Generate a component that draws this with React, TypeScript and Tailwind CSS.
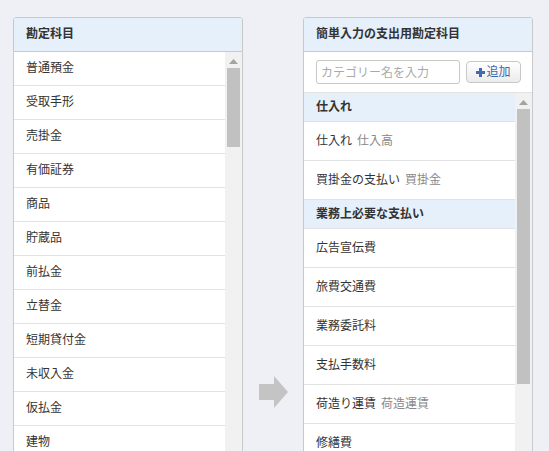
import React from "react";

const font = { fontFamily: '"Noto Sans CJK JP", "Noto Sans", sans-serif' };

const leftItems = [
  "普通預金",
  "受取手形",
  "売掛金",
  "有価証券",
  "商品",
  "貯蔵品",
  "前払金",
  "立替金",
  "短期貸付金",
  "未収入金",
  "仮払金",
  "建物",
];

type RightRow = { group?: boolean; label: string; sub?: string };
const rightItems: RightRow[] = [
  { group: true, label: "仕入れ" },
  { label: "仕入れ", sub: "仕入高" },
  { label: "買掛金の支払い", sub: "買掛金" },
  { group: true, label: "業務上必要な支払い" },
  { label: "広告宣伝費" },
  { label: "旅費交通費" },
  { label: "業務委託料" },
  { label: "支払手数料" },
  { label: "荷造り運賃", sub: "荷造運賃" },
  { label: "修繕費" },
];

function Scrollbar({ thumbTop, thumbHeight }: { thumbTop: number; thumbHeight: number }) {
  return (
    <div className="w-[17px] shrink-0 bg-[#f1f1f1] flex flex-col items-center">
      <svg width="9" height="5" viewBox="0 0 9 5" className="mt-[7px]">
        <polygon points="4.5,0 9,5 0,5" fill="#a3a3a3" />
      </svg>
      <div
        className="w-[13px] bg-[#c1c1c1]"
        style={{ marginTop: thumbTop, height: thumbHeight }}
      />
    </div>
  );
}

export default function App() {
  return (
    <div
      className="h-[451px] w-[549px] overflow-hidden bg-[#eef0f5] flex pl-[13px] pt-[17px] text-[12px] text-[#333]"
      style={font}
    >
      {/* Left panel */}
      <div className="w-[230px] h-[460px] shrink-0 border border-[#c9c9c9] rounded-t-[3px] bg-white flex flex-col overflow-hidden">
        <div className="h-[34px] shrink-0 bg-[#e6f0fb] border-b border-[#c9c9c9] flex items-center pl-[12px] pb-[3px] font-bold text-[#333]">
          勘定科目
        </div>
        <div className="flex flex-1 min-h-0">
          <div className="flex-1 flex flex-col">
            {leftItems.map((t) => (
              <div
                key={t}
                className="h-[34px] shrink-0 border-b border-[#e2e2e2] flex items-center pl-[12px] pb-[3px]"
              >
                {t}
              </div>
            ))}
          </div>
          <Scrollbar thumbTop={4} thumbHeight={79} />
        </div>
      </div>

      {/* Arrow */}
      <div className="w-[60px] shrink-0 flex justify-center pt-[359px]">
        <svg width="29" height="32" viewBox="0 0 29 32">
          <polygon points="0,8 15,8 15,0 29,16 15,32 15,24 0,24" fill="#c4c4c4" />
        </svg>
      </div>

      {/* Right panel */}
      <div className="w-[230px] h-[460px] shrink-0 border border-[#c9c9c9] rounded-t-[3px] bg-white flex flex-col overflow-hidden">
        <div className="h-[34px] shrink-0 bg-[#e6f0fb] border-b border-[#c9c9c9] flex items-center pl-[12px] pb-[3px] font-bold text-[#333]">
          簡単入力の支出用勘定科目
        </div>
        <div className="h-[41px] shrink-0 border-b border-[#e2e2e2] flex items-start pt-[8px] pl-[12px] gap-[6px]">
          <input
            className="w-[144px] h-[24px] border border-[#c8c8c8] rounded-[3px] px-[4px] pb-[2px] text-[12px] outline-none placeholder:text-[#aaaaaa]"
            style={font}
            placeholder="カテゴリー名を入力"
          />
          <button
            className="mt-[1px] w-[55px] h-[22px] border border-[#c8c8c8] rounded-[4px] bg-gradient-to-b from-white to-[#ececec] flex items-center justify-center pb-[2px] text-[12px] text-[#3b68ad]"
            style={font}
          >
            <svg width="9" height="9" viewBox="0 0 9 9" className="mr-[1px] mt-[2px]">
              <rect x="3" y="0" width="3" height="9" fill="#3d6cb5" />
              <rect x="0" y="3" width="9" height="3" fill="#3d6cb5" />
            </svg>
            追加
          </button>
        </div>
        <div className="flex flex-1 min-h-0">
          <div className="flex-1 flex flex-col">
            {rightItems.map((r, i) =>
              r.group ? (
                <div
                  key={i}
                  className="h-[29px] shrink-0 bg-[#e6f0fb] border-b border-[#e2e2e2] flex items-center pl-[12px] pb-[3px] font-bold text-[#333]"
                >
                  {r.label}
                </div>
              ) : (
                <div
                  key={i}
                  className="h-[39px] shrink-0 border-b border-[#e2e2e2] flex items-center pl-[12px] pb-[3px]"
                >
                  <span>{r.label}</span>
                  {r.sub && <span className="ml-[5px] text-[#888888]">{r.sub}</span>}
                </div>
              )
            )}
          </div>
          <Scrollbar thumbTop={4} thumbHeight={275} />
        </div>
      </div>
    </div>
  );
}
